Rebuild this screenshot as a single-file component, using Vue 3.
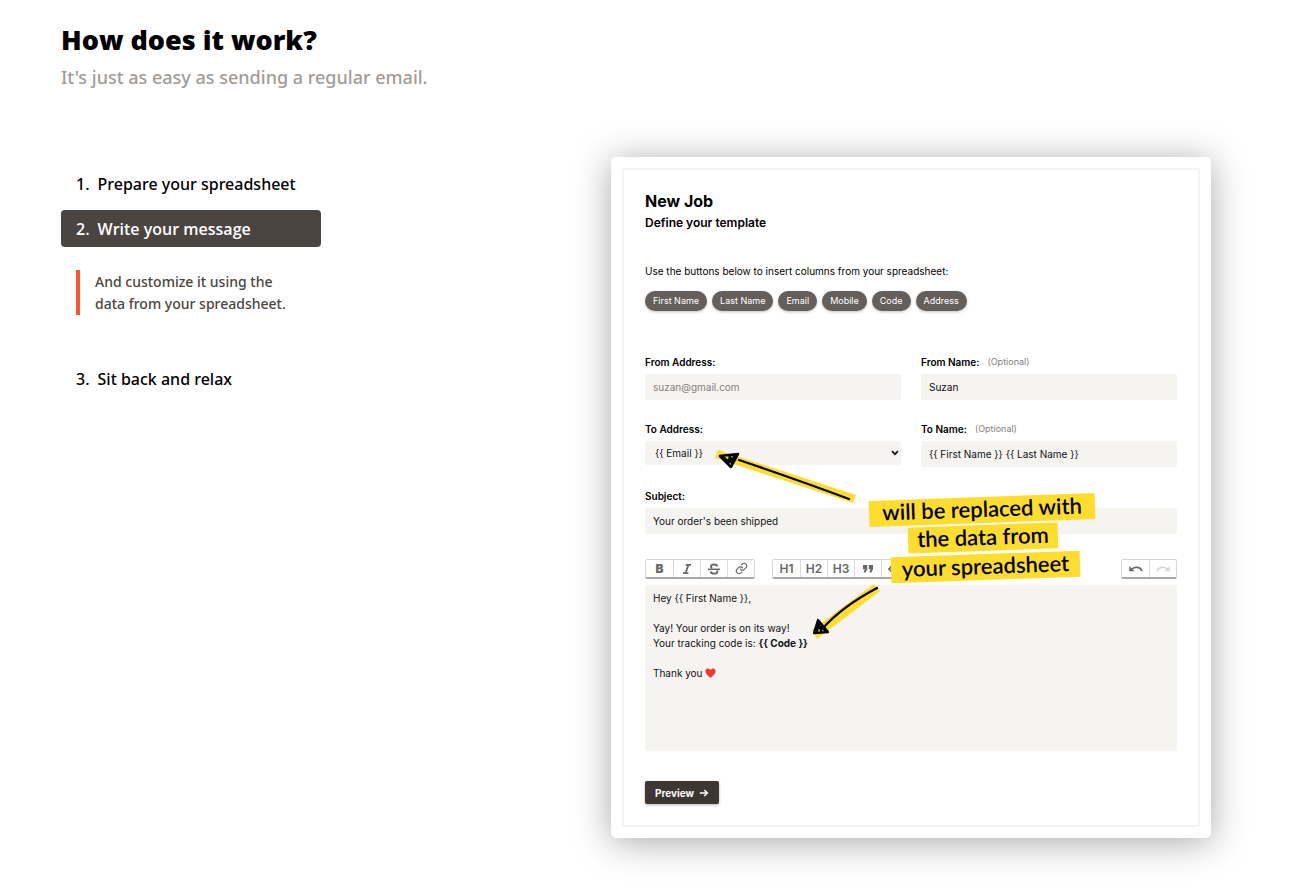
<script setup>
import { ref } from 'vue'

const columns = ['First Name', 'Last Name', 'Email', 'Mobile', 'Code', 'Address']
const tag = (name) => `{{ ${name} }}`

const active = ref(1)
const steps = [
  { title: 'Prepare your spreadsheet' },
  { title: 'Write your message', text: 'And customize it using the data from your spreadsheet.' },
  { title: 'Sit back and relax' },
]

const toAddress = ref('Email')
const toName = ref(`${tag('First Name')} ${tag('Last Name')}`)
</script>

<template>
  <main class="page">
    <header>
      <h1>How does it work?</h1>
      <p class="lead">It's just as easy as sending a regular email.</p>
    </header>

    <div class="content">
      <ol class="steps">
        <li v-for="(step, i) in steps" :key="step.title">
          <button type="button" class="step" :class="{ active: i === active }" @click="active = i">
            <span>{{ i + 1 }}.</span><span>{{ step.title }}</span>
          </button>
          <p v-if="i === active && step.text" class="detail">{{ step.text }}</p>
        </li>
      </ol>

      <section class="card">
        <form class="job" @submit.prevent>
          <h2>New Job</h2>
          <h3>Define your template</h3>
          <p class="hint">Use the buttons below to insert columns from your spreadsheet:</p>
          <div class="pills">
            <button v-for="c in columns" :key="c" type="button">{{ c }}</button>
          </div>

          <div class="fields">
            <div class="field">
              <label for="from-address">From Address:</label>
              <input id="from-address" type="text" placeholder="suzan@gmail.com">
            </div>
            <div class="field">
              <label for="from-name">From Name: <small>(Optional)</small></label>
              <input id="from-name" type="text" value="Suzan">
            </div>
            <div class="field">
              <label for="to-address">To Address:</label>
              <div class="select">
                <select id="to-address" v-model="toAddress">
                  <option v-for="c in columns" :key="c" :value="c">{{ tag(c) }}</option>
                </select>
                <svg viewBox="0 0 8 6" width="8" height="6"><path d="M1 1.2 4 4.2 7 1.2" fill="none" stroke="#111" stroke-width="1.7" /></svg>
              </div>
            </div>
            <div class="field">
              <label for="to-name">To Name: <small>(Optional)</small></label>
              <input id="to-name" v-model="toName" type="text">
            </div>
            <div class="field wide">
              <label for="subject">Subject:</label>
              <input id="subject" type="text" value="Your order's been shipped">
            </div>
          </div>

          <div class="toolbar">
            <div class="group">
              <button type="button" aria-label="Bold"><b>B</b></button>
              <button type="button" aria-label="Italic">
                <svg viewBox="0 0 12 12" width="12" height="12"><path d="M4.6 1.8H10M2 10.2h5.4M7.4 1.8 4.6 10.2" fill="none" stroke="currentColor" stroke-width="1.8" /></svg>
              </button>
              <button type="button" aria-label="Strikethrough">
                <svg viewBox="0 0 14 12" width="14" height="12"><path d="M1 6.3h12" stroke="currentColor" stroke-width="1.5" /><path d="M10.3 3.4C10 2 8.700 1.500 7 1.500 5.100 1.500 3.900 2.300 3.900 3.500c0 .8.5 1.300 1.300 1.600M3.600 8.300C3.800 9.900 5.200 10.600 7 10.600c2 0 3.400-.8 3.400-2.200 0-.4-.1-.8-.4-1.100" fill="none" stroke="currentColor" stroke-width="1.900" /></svg>
              </button>
              <button type="button" aria-label="Link">
                <svg viewBox="0 0 24 24" width="13" height="13" fill="none" stroke="currentColor" stroke-width="2.200" stroke-linecap="round"><path d="M10 13a5 5 0 0 0 7.500.5l3-3a5 5 0 0 0-7-7l-1.700 1.700M14 11a5 5 0 0 0-7.500-.5l-3 3a5 5 0 0 0 7 7l1.700-1.700" /></svg>
              </button>
            </div>
            <div class="group">
              <button type="button">H1</button>
              <button type="button">H2</button>
              <button type="button">H3</button>
              <button type="button" aria-label="Quote">
                <svg viewBox="0 0 12 10" width="12" height="10" fill="currentColor"><path d="M1 1h4.200v4.200L3.700 8.600H1.600L2.800 5.200H1zM6.800 1H11v4.200L9.500 8.600H7.400l1.200-3.400H6.800z" /></svg>
              </button>
              <button type="button" aria-label="Code">
                <svg viewBox="0 0 14 10" width="14" height="10" fill="none" stroke="currentColor" stroke-width="1.600"><path d="M4.500 1.500 1 5l3.500 3.500M9.500 1.500 13 5 9.500 8.500" /></svg>
              </button>
            </div>
            <div class="group end">
              <button type="button" aria-label="Undo">
                <svg viewBox="0 0 14 8" width="14" height="8"><path d="M.3 1v5.300h5.300z" fill="currentColor" /><path d="M2.800 4.300C6 1.200 11.300 1.600 13.200 6.200" fill="none" stroke="currentColor" stroke-width="1.600" /></svg>
              </button>
              <button type="button" aria-label="Redo" disabled>
                <svg viewBox="0 0 14 8" width="14" height="8"><path d="M13.700 1v5.300H8.400z" fill="currentColor" /><path d="M11.200 4.300C8 1.200 2.700 1.600.8 6.200" fill="none" stroke="currentColor" stroke-width="1.600" /></svg>
              </button>
            </div>
          </div>

          <div class="editor" contenteditable="true" role="textbox" aria-multiline="true" aria-label="Message">
            <p>Hey {{ tag('First Name') }},</p>
            <p><br></p>
            <p>Yay! Your order is on its way!</p>
            <p>Your tracking code is: <b>{{ tag('Code') }}</b></p>
            <p><br></p>
            <p>Thank you <svg class="heart" viewBox="0 0 12 11" width="11" height="10"><path d="M6 10.700C3.500 8.800.4 6.400.4 3.500.4 1.700 1.700.5 3.200.5 4.400.5 5.500 1.200 6 2.300 6.500 1.200 7.600.5 8.800.5c1.500 0 2.800 1.200 2.800 3 0 2.900-3.100 5.300-5.600 7.200z" fill="#f23a2c" /></svg></p>
          </div>

          <button class="preview" type="submit">
            Preview
            <svg viewBox="0 0 10 8" width="10" height="8"><path d="M.8 4h7.400M5.200 1l3.200 3-3.200 3" fill="none" stroke="currentColor" stroke-width="1.500" /></svg>
          </button>
        </form>

        <svg class="arrows" viewBox="0 0 600 681" aria-hidden="true">
          <g fill="#ffdd2f">
            <path d="M107 293 245 338 242 346 104 301z" />
            <path d="M201 473 263 427 269 434 206 482z" />
          </g>
          <g fill="none" stroke="#000" stroke-linecap="round" stroke-linejoin="round">
            <path d="M238 342Q190 324 128 303" stroke-width="2.300" />
            <path d="M109 299 127 297 120 310zM112 300l6 5 1-6 2 8 2-8 1 4" stroke-width="2.600" />
            <path d="M266 431Q232 449 212 471" stroke-width="2.300" />
            <path d="M203 476 207 463 217 475zM206 474l2-7 2 7 1-5 3 5" stroke-width="2.300" />
          </g>
        </svg>
        <p class="note n1">will be replaced with</p>
        <p class="note n2">the data from</p>
        <p class="note n3">your spreadsheet</p>
      </section>
    </div>
  </main>
</template>

<style>
body {
  margin: 0;
  background: #fff;
}
</style>

<style scoped>
* {
  box-sizing: border-box;
}
h1, h2, h3, p, ol {
  margin: 0;
  padding: 0;
}
button, input, select {
  font: inherit;
  color: inherit;
  border: 0;
  margin: 0;
}
.page {
  padding: 22px 100px 58px 61px;
  font-family: "Noto Sans", "Open Sans", sans-serif;
  color: #000;
}
h1 {
  font-family: "Open Sans", "Noto Sans", sans-serif;
  font-size: 27px;
  line-height: 36px;
  font-weight: 800;
}
.lead {
  margin-top: 6px;
  font-size: 18px;
  line-height: 26px;
  font-weight: 500;
  color: #a19c97;
}
.content {
  display: flex;
  justify-content: space-between;
  align-items: flex-start;
  gap: 40px;
  margin-top: 67px;
}
.steps {
  flex: 0 0 260px;
  display: grid;
  gap: 8px;
  padding-top: 8px;
  list-style: none;
}
.step {
  display: flex;
  align-items: center;
  gap: 8px;
  width: 100%;
  height: 37px;
  padding: 0 15px;
  border-radius: 4px;
  background: none;
  font-size: 16px;
  font-weight: 500;
  white-space: nowrap;
}
.step.active {
  background: #4a4541;
  color: #fff;
  font-family: "Open Sans", "Noto Sans", sans-serif;
  font-weight: 600;
}
.detail {
  margin: 23px 15px 37px;
  padding: 1px 0 0 15px;
  border-left: 4px solid #ff5631;
  font-size: 14px;
  line-height: 22px;
  font-weight: 500;
  color: #4a4541;
}
.card {
  position: relative;
  flex: 0 1 600px;
  padding: 11px;
  border-radius: 5px;
  background: #fff;
  box-shadow: 0 4px 36px rgba(40, 38, 34, 0.4);
  font-family: Inter, sans-serif;
  font-size: 10px;
}
.job {
  display: flex;
  flex-direction: column;
  padding: 21px;
  border: 2px solid #f5f4f1;
  border-radius: 3px;
}
h2 {
  font-size: 16px;
  line-height: 20px;
  font-weight: 700;
}
h3 {
  margin-top: 4px;
  font-size: 12px;
  line-height: 16px;
  font-weight: 600;
}
.hint {
  margin-top: 32px;
  font-size: 10px;
  line-height: 16px;
}
.pills {
  display: flex;
  flex-wrap: wrap;
  gap: 5px;
  margin-top: 12px;
}
.pills button {
  height: 20px;
  padding: 0 8px 1px;
  border-radius: 10px;
  background: #655f5b;
  color: #fff;
  font-size: 9px;
  box-shadow: 0 1px 3px rgba(0, 0, 0, 0.25);
}
.fields {
  display: grid;
  grid-template-columns: 1fr 1fr;
  gap: 22px 20px;
  margin-top: 44px;
}
.wide {
  grid-column: 1 / -1;
}
label {
  display: flex;
  gap: 8px;
  margin-bottom: 5px;
  line-height: 14px;
  font-weight: 600;
}
small {
  font-size: 9px;
  font-weight: 400;
  color: #85817d;
}
.field input, select {
  display: block;
  width: 100%;
  height: 26px;
  padding: 0 8px;
  border-radius: 2px;
  background: #f5f4f1;
  font-size: 10px;
  color: #111;
}
input::placeholder {
  color: #85817d;
  opacity: 1;
}
.select {
  position: relative;
}
.select select {
  height: 24px;
  padding: 0 10px;
  appearance: none;
}
.select svg {
  position: absolute;
  right: 2px;
  top: 9px;
}
.toolbar {
  display: flex;
  gap: 17px;
  margin-top: 25px;
}
.group {
  display: flex;
  height: 20px;
  border: 1px solid #d8d7d5;
  border-bottom: 2px solid #aaa9a7;
  border-radius: 2px;
}
.group.end {
  margin-left: auto;
}
.group button {
  display: grid;
  place-items: center;
  width: 27px;
  padding: 0;
  background: #fff;
  font-size: 12px;
  line-height: 16px;
  font-weight: 600;
  color: #686868;
}
.group button + button {
  border-left: 1px solid #dddcda;
}
.group button:disabled {
  color: #d8d8d8;
}
.editor {
  min-height: 166px;
  margin-top: 6px;
  padding: 6px 8px;
  border-radius: 2px;
  background: #f5f4f1;
  font-size: 10px;
  line-height: 15px;
  color: #111;
}
.editor b {
  font-weight: 700;
}
.heart {
  vertical-align: -1px;
}
.preview {
  display: flex;
  align-items: center;
  align-self: flex-start;
  gap: 5px;
  height: 23px;
  margin-top: 30px;
  padding: 0 10px;
  border-radius: 2px;
  background: #3d3734;
  color: #fff;
  font-size: 10px;
  font-weight: 700;
  box-shadow: 0 1px 3px rgba(0, 0, 0, 0.3);
}
.arrows {
  position: absolute;
  left: 0;
  top: 0;
  width: 600px;
  height: 681px;
  pointer-events: none;
}
.note {
  position: absolute;
  height: 26px;
  background: #ffdd2f;
  font-family: Lato, sans-serif;
  font-size: 22px;
  line-height: 24px;
  font-weight: 600;
  text-align: center;
  white-space: nowrap;
  transform: rotate(-2deg);
}
.n1 {
  left: 258px;
  top: 340px;
  width: 226px;
}
.n2 {
  left: 297px;
  top: 368px;
  width: 150px;
}
.n3 {
  left: 280px;
  top: 397px;
  width: 189px;
}
</style>
